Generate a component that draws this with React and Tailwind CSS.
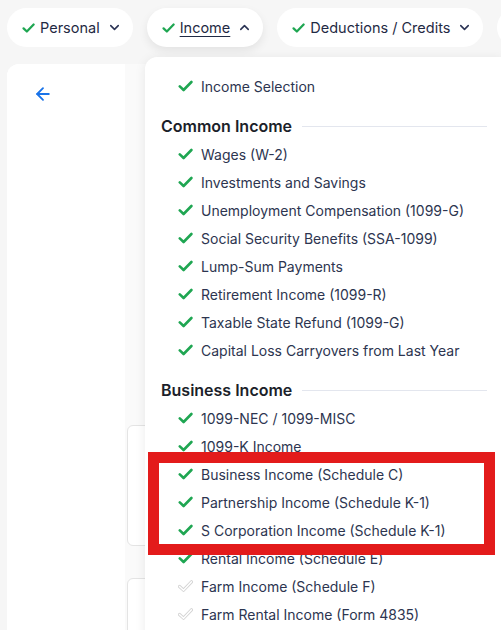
import React from "react";
import { ChevronDown, ChevronUp, ArrowLeft } from "lucide-react";

const FONT = { fontFamily: "Inter, 'Noto Sans', sans-serif" };

const COMMON = [
    "Wages (W-2)",
    "Investments and Savings",
    "Unemployment Compensation (1099-G)",
    "Social Security Benefits (SSA-1099)",
    "Lump-Sum Payments",
    "Retirement Income (1099-R)",
    "Taxable State Refund (1099-G)",
    "Capital Loss Carryovers from Last Year",
];

const BUSINESS = [
    { label: "1099-NEC / 1099-MISC", done: true },
    { label: "1099-K Income", done: true },
    { label: "Business Income (Schedule C)", done: true },
    { label: "Partnership Income (Schedule K-1)", done: true },
    { label: "S Corporation Income (Schedule K-1)", done: true },
    { label: "Rental Income (Schedule E)", done: true },
    { label: "Farm Income (Schedule F)", done: false },
    { label: "Farm Rental Income (Form 4835)", done: false },
];

// filled green tick, or the hollow gray one for steps not done yet
function Tick({ done = true, small = false }) {
    const w = small ? 13 : 15;
    if (!done) {
        return (
            <svg width={w} height="12" viewBox="0 0 15 12" className="shrink-0">
                <path d="M1.5 6.5 L5.5 10.2 L13.5 1.8" fill="none" stroke="#d4d4d4" strokeWidth="3.2" strokeLinecap="round" strokeLinejoin="round" />
                <path d="M1.5 6.5 L5.5 10.2 L13.5 1.8" fill="none" stroke="#ffffff" strokeWidth="1.4" strokeLinecap="round" strokeLinejoin="round" />
            </svg>
        );
    }
    return (
        <svg width={w} height="12" viewBox="0 0 15 12" className="shrink-0">
            <path d="M1.8 6.4 L5.6 10 L13.4 2" fill="none" stroke="#1fa652" strokeWidth="2.6" strokeLinecap="round" strokeLinejoin="round" />
        </svg>
    );
}

function Pill({ label, open = false }) {
    return (
        <button
            type="button"
            className={`h-[39px] shrink-0 rounded-full bg-white flex items-center pl-[15px] pr-[11px] text-[14.5px] text-[#1f2a44] ${open ? "shadow-[0_4px_10px_rgba(0,0,0,0.08)]" : ""}`}
        >
            <Tick small />
            <span className={`ml-[5px] ${open ? "underline underline-offset-[3px]" : ""}`}>{label}</span>
            {open ? (
                <ChevronUp size={15} strokeWidth={2.5} className="ml-[7px] text-[#2a3354]" />
            ) : (
                <ChevronDown size={15} strokeWidth={2.5} className="ml-[7px] text-[#2a3354]" />
            )}
        </button>
    );
}

function Row({ label, done = true }) {
    return (
        <div className="h-[28px] flex items-center pl-[33px] gap-[8px]">
            <Tick done={done} />
            <span className="text-[14px] text-[#2d3550] whitespace-nowrap">{label}</span>
        </div>
    );
}

function Heading({ children }) {
    return (
        <div className="h-[28px] mt-[12px] flex items-center gap-[10px]">
            <span className="text-[16px] font-semibold text-[#1c1f2a] whitespace-nowrap">{children}</span>
            <div className="flex-1 h-px bg-[#e3e6ee]" />
        </div>
    );
}

export default function App() {
    return (
        <div className="relative w-[501px] h-[630px] overflow-hidden bg-[#f6f6f6]" style={FONT}>
            {/* step nav */}
            <nav className="flex gap-[14px] pl-[7px] pt-[8px]">
                <Pill label="Personal" />
                <Pill label="Income" open />
                <Pill label="Deductions / Credits" />
                <div className="h-[39px] w-[100px] shrink-0 rounded-full bg-white" />
            </nav>

            {/* page body behind the menu */}
            <div className="mt-[17px] ml-[7px] flex h-[600px] rounded-tl-[12px] overflow-hidden bg-white">
                <div className="w-[118px] shrink-0 bg-white pl-[26px] pt-[20px]">
                    <ArrowLeft size={20} strokeWidth={2.2} className="text-[#1a73e8]" />
                </div>
                <div className="flex-1 bg-[#fafafa] pl-[2px] pt-[361px] flex flex-col gap-[32px]">
                    <div className="h-[121px] shrink-0 rounded-[6px] border border-[#e4e4e4] bg-white" />
                    <div className="h-[140px] shrink-0 rounded-[6px] border border-[#e4e4e4] bg-white" />
                </div>
            </div>

            {/* income dropdown */}
            <div className="absolute left-[145px] top-[57px] w-[358px] h-[600px] rounded-tl-[12px] bg-white shadow-[0_2px_12px_rgba(0,0,0,0.08)] pt-[15px] pl-[16px] pr-[16px]">
                <div className="-ml-[16px]">
                    <Row label="Income Selection" />
                </div>
                <Heading>Common Income</Heading>
                <div className="-ml-[16px]">
                    {COMMON.map((c) => (
                        <Row key={c} label={c} />
                    ))}
                </div>
                <Heading>Business Income</Heading>
                <div className="-ml-[16px]">
                    {BUSINESS.map((b) => (
                        <Row key={b.label} label={b.label} done={b.done} />
                    ))}
                </div>
            </div>

            {/* annotation box */}
            <div className="absolute left-[148px] top-[452px] w-[347px] h-[103px] border-[11px] border-[#e31b1b]" />
        </div>
    );
}
